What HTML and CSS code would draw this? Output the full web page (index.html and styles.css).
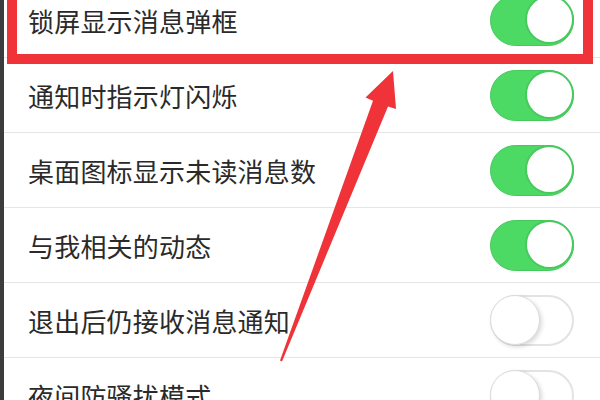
FILE: index.html
```html
<!DOCTYPE html>
<html lang="zh">
<head>
<meta charset="utf-8">
<link rel="stylesheet" href="styles.css">
</head>
<body>
<div class="screen">
  <div class="edge"></div>
  <div class="list">
    <div class="row"><span class="label">锁屏显示消息弹框</span><span class="switch on"><span class="knob"></span></span></div>
    <div class="row"><span class="label">通知时指示灯闪烁</span><span class="switch on"><span class="knob"></span></span></div>
    <div class="row"><span class="label">桌面图标显示未读消息数</span><span class="switch on"><span class="knob"></span></span></div>
    <div class="row"><span class="label">与我相关的动态</span><span class="switch on"><span class="knob"></span></span></div>
    <div class="row"><span class="label">退出后仍接收消息通知</span><span class="switch off"><span class="knob"></span></span></div>
    <div class="row"><span class="label">夜间防骚扰模式</span><span class="switch off"><span class="knob"></span></span></div>
  </div>
  <div class="highlight"></div>
  <svg class="arrow" width="600" height="400" viewBox="0 0 600 400">
    <polygon points="393,71 396,109 388,106.5 282,361.5 280,360.5 373,100.7 365.5,97.5" fill="#ef3338"/>
  </svg>
</div>
</body>
</html>
```

FILE: styles.css
```css
html, body {
  margin: 0;
  padding: 0;
  background: #ffffff;
}
.screen {
  position: relative;
  width: 600px;
  height: 400px;
  overflow: hidden;
  display: flex;
  background: #ffffff;
  font-family: "Noto Sans CJK SC", "Noto Sans", sans-serif;
}
.edge {
  width: 4px;
  flex: none;
  background: #3c3c3c;
}
.list {
  flex: 1;
  margin-top: -17px;
  display: flex;
  flex-direction: column;
}
.row {
  height: 74px;
  flex: none;
  border-bottom: 1px solid #e6e6e6;
  display: flex;
  align-items: center;
  justify-content: space-between;
  padding: 0 26px 0 24px;
}
.label {
  font-size: 26px;
  color: #2a2a2a;
  letter-spacing: 0.2px;
}
.switch {
  position: relative;
  width: 84px;
  height: 51px;
  box-sizing: border-box;
  border-radius: 26px;
  flex: none;
}
.switch.on {
  background: #4cd964;
  border: 1px solid #46c95c;
}
.switch.off {
  background: #ffffff;
  border: 2px solid #e3e3e3;
}
.knob {
  position: absolute;
  top: -1px;
  width: 49px;
  height: 49px;
  box-sizing: border-box;
  border-radius: 50%;
  background: #ffffff;
}
.switch.on .knob {
  right: -1px;
  border: 2px solid #48c95e;
}
.switch.off .knob {
  left: -2px;
  top: -2px;
  width: 50px;
  height: 50px;
  border: 1px solid #dcdcdc;
  box-shadow: 2px 2px 4px rgba(0, 0, 0, 0.15);
}
.highlight {
  position: absolute;
  left: 7px;
  top: -20px;
  width: 586px;
  height: 84px;
  box-sizing: border-box;
  border: 10px solid #ef3338;
}
.arrow {
  position: absolute;
  left: 0;
  top: 0;
}
```
